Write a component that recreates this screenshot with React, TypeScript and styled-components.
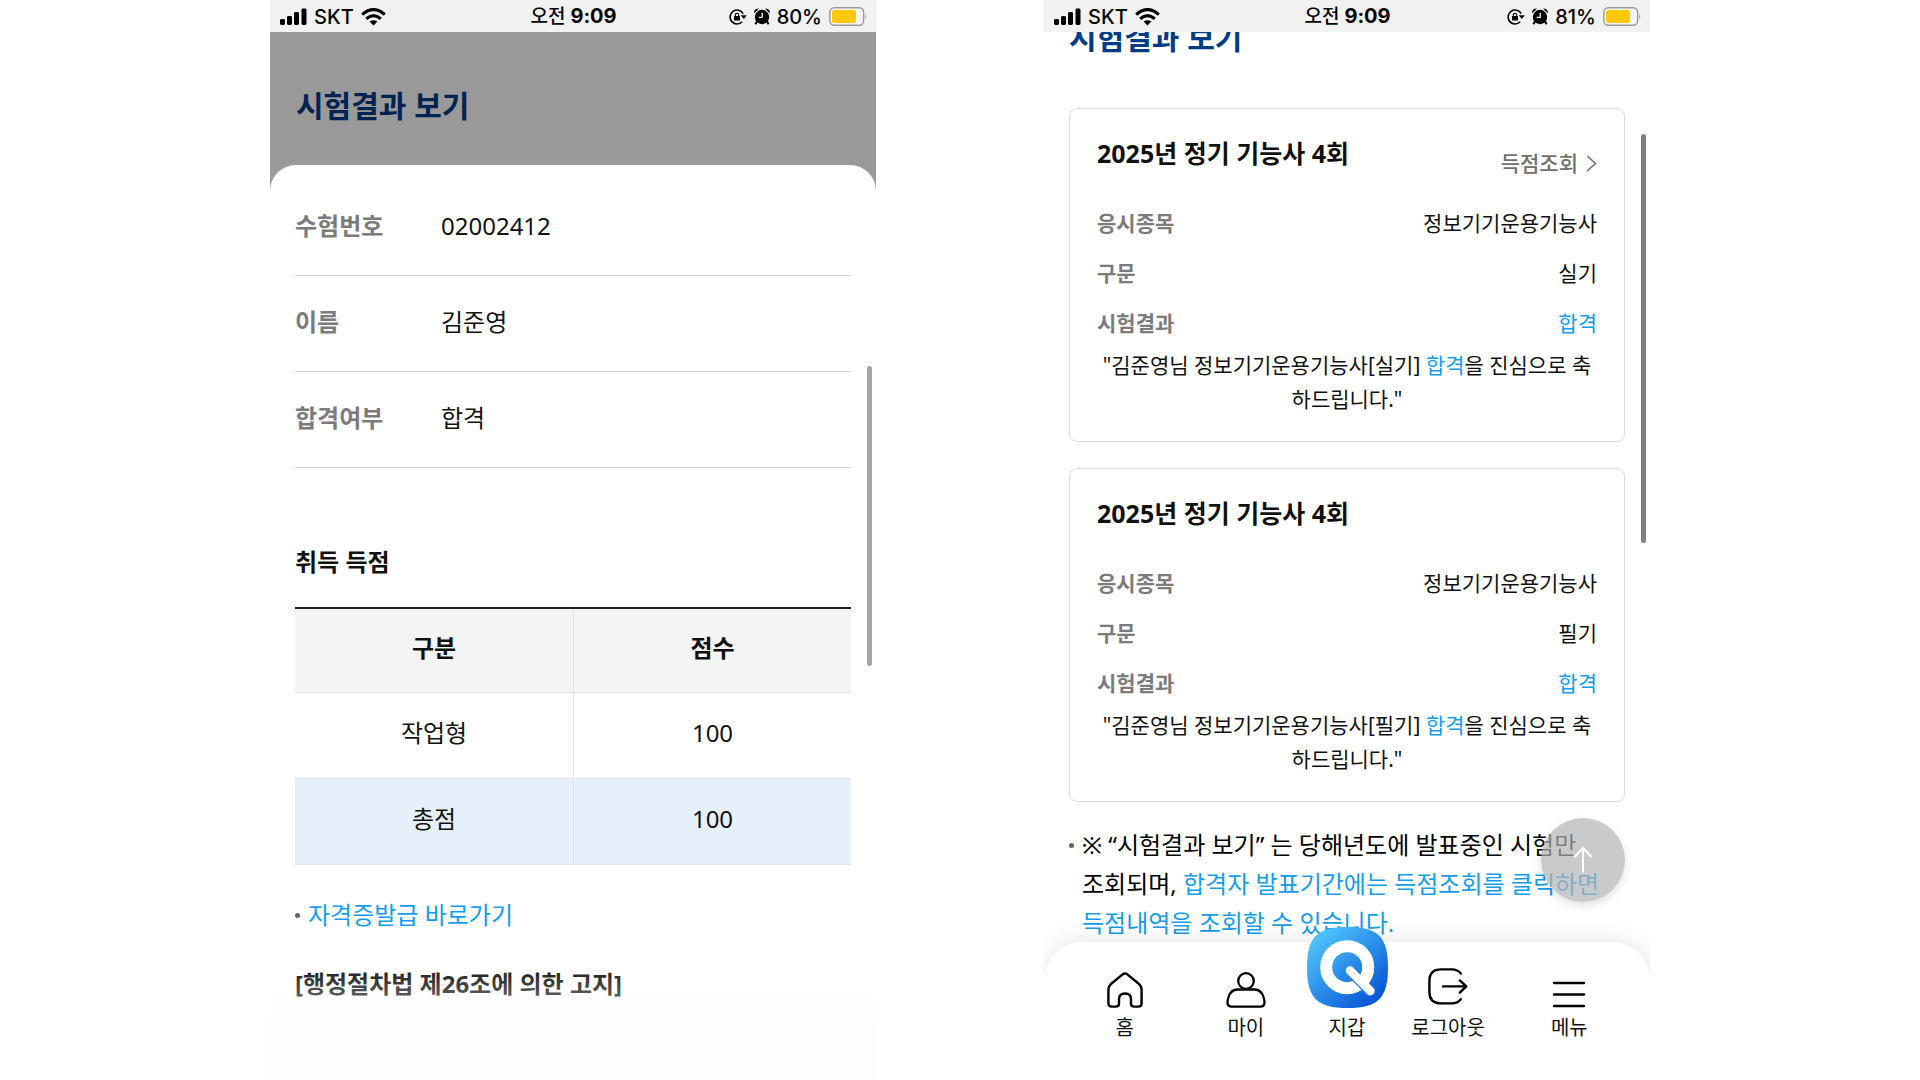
import React from 'react';
import styled, { createGlobalStyle } from 'styled-components';

const GlobalStyle = createGlobalStyle`
  *, *::before, *::after { box-sizing: border-box; }
  body {
    margin: 0;
    background: #fff;
    color: #111;
    font-family: "Noto Sans", "Noto Sans CJK KR", sans-serif;
    word-break: keep-all;
  }
  h1, h2, h3, p, dl, dd, ul { margin: 0; padding: 0; }
  ul { list-style: none; }
  a { color: inherit; text-decoration: none; }
  button { padding: 0; border: 0; background: none; font: inherit; color: inherit; cursor: pointer; }
  svg { display: block; flex: none; }
`;

const Screens = styled.main`
  display: grid;
  grid-template-columns: repeat(2, minmax(0, 606px));
  justify-content: center;
  column-gap: 168px;
  height: 100vh;
`;

const Phone = styled.section<{ $dimmed?: boolean }>`
  position: relative;
  display: flex;
  flex-direction: column;
  min-height: 0;
  overflow: hidden;
  background: ${(p) => (p.$dimmed ? '#999' : '#fff')};
`;

const StatusBar = styled.header`
  position: relative;
  z-index: 2;
  display: grid;
  grid-template-columns: 1fr auto 1fr;
  align-items: center;
  flex: none;
  height: 32px;
  padding: 0 9px 0 10px;
  background: #f1f1f1;
  color: #000;
  font: 500 20px/32px Inter, "Noto Sans CJK KR", sans-serif;
`;

const StatusGroup = styled.div<{ $end?: boolean }>`
  display: flex;
  align-items: center;
  justify-content: ${(p) => (p.$end ? 'flex-end' : 'flex-start')};
  gap: 7px;
`;

const Clock = styled.time`
  font-size: 19px;
  b { font-size: 20px; font-weight: 700; }
`;

const PageTitle = styled.h1<{ $dimmed?: boolean }>`
  font-size: 30px;
  line-height: 40px;
  font-weight: 700;
  color: ${(p) => (p.$dimmed ? '#002452' : '#003b88')};
`;

const DimmedHeader = styled.div`
  flex: none;
  height: 133px;
  padding: 54px 26px 0;
`;

const Sheet = styled.div`
  flex: 1;
  min-height: 0;
  overflow: hidden;
  padding: 15px 25px 0;
  border-radius: 26px 26px 0 0;
  background: #fff;
`;

const SheetFade = styled.div`
  position: absolute;
  inset: auto 0 0;
  height: 116px;
  background: linear-gradient(rgba(253, 253, 253, 0), #fdfdfd 90%);
  pointer-events: none;
`;

const InfoRow = styled.div`
  display: grid;
  grid-template-columns: 146px 1fr;
  align-items: center;
  height: 96px;
  padding-bottom: 4px;
  border-bottom: 1px solid #d9d9d9;
  font-size: 24px;
  line-height: 36px;
  dt { color: #7b7b7b; font-weight: 700; }
`;

const SectionTitle = styled.h2<{ $top: number }>`
  margin-top: ${(p) => p.$top}px;
  font-size: 24px;
  line-height: 36px;
  font-weight: 700;
`;

const ScoreTable = styled.table`
  width: 100%;
  margin-top: 27px;
  border-spacing: 0;
  border-top: 2px solid #202326;
  table-layout: fixed;
  font-size: 24px;
  line-height: 36px;
  text-align: center;
  th, td {
    height: 86px;
    padding: 0 0 6px;
    border-bottom: 1px solid #e3e3e3;
  }
  th + th, td + td { border-left: 1px solid #e3e3e3; }
  th { height: 84px; background: #f4f4f4; font-weight: 700; }
`;

const ScoreRow = styled.tr<{ $total?: boolean }>`
  background: ${(p) => (p.$total ? '#e6f0fb' : '#fff')};
`;

const BulletItem = styled.li`
  display: flex;
  gap: 8px;
  &::before {
    content: "";
    flex: none;
    width: 5px;
    height: 5px;
    margin-top: 18px;
    border-radius: 50%;
    background: #666;
  }
`;

const SheetLinks = styled.ul`
  margin-top: 30px;
  font-size: 24px;
  line-height: 39px;
  color: #149dee;
`;

const ScrollThumb = styled.div<{ $top: number; $length: number; $tone: string }>`
  position: absolute;
  top: ${(p) => p.$top}px;
  right: 4px;
  width: 5px;
  height: ${(p) => p.$length}px;
  border-radius: 3px;
  background: ${(p) => p.$tone};
`;

const ResultPage = styled.div`
  flex: 1;
  min-height: 0;
  padding: 0 25px;
  & > h1 { margin-top: -14px; }
`;

const CardList = styled.div`
  display: grid;
  gap: 26px;
  margin-top: 50px;
`;

const Card = styled.article`
  padding: 26px 27px 25px;
  border: 1px solid #dcdcdc;
  border-radius: 8px;
`;

const CardHead = styled.div`
  display: flex;
  align-items: center;
  justify-content: space-between;
  height: 56px;
  margin-bottom: 7px;
`;

const CardTitle = styled.h2`
  align-self: flex-start;
  font-size: 25px;
  line-height: 36px;
  font-weight: 700;
`;

const ScoreButton = styled.button`
  display: flex;
  align-items: center;
  gap: 8px;
  font-size: 21px;
  line-height: 34px;
  font-weight: 500;
  color: #6f6f6f;
`;

const CardRow = styled.div`
  display: flex;
  align-items: center;
  justify-content: space-between;
  height: 50px;
  font-size: 21px;
  line-height: 34px;
  dt { color: #7b7b7b; font-weight: 700; }
`;

const Accent = styled.span`
  color: #149dee;
`;

const Message = styled.p`
  font-size: 21px;
  line-height: 34px;
  text-align: center;
  word-break: break-all;
`;

const Notes = styled.ul`
  margin-top: 23px;
  font-size: 24px;
  line-height: 39px;
  color: #000;
`;

const TopButton = styled.button`
  position: absolute;
  right: 25px;
  bottom: 178px;
  display: grid;
  place-items: center;
  width: 84px;
  height: 84px;
  border-radius: 50%;
  background: rgba(178, 179, 181, 0.7);
  box-shadow: 0 4px 10px rgba(0, 0, 0, 0.12);
`;

const TabBar = styled.nav`
  position: relative;
  z-index: 1;
  flex: none;
  display: grid;
  grid-template-columns: 3fr 3fr 2fr 3fr 3fr;
  padding: 30px 20px 40px;
  border-radius: 38px 38px 0 0;
  background: #fff;
  box-shadow: 0 -2px 24px rgba(0, 0, 0, 0.1);
`;

const Tab = styled.a`
  display: flex;
  flex-direction: column;
  align-items: center;
  gap: 8px;
  font-size: 20px;
  line-height: 24px;
  white-space: nowrap;
`;

const TabIcon = styled.span`
  display: flex;
  align-items: flex-end;
  height: 36px;
`;

const SignalIcon = () => (
  <svg width="27" height="18" viewBox="0 0 27 18" fill="#000">
    <rect x="0" y="11" width="5" height="6" rx="1.4" />
    <rect x="7" y="8" width="5" height="9" rx="1.4" />
    <rect x="14" y="4" width="5" height="13" rx="1.4" />
    <rect x="21.500" y="0.500" width="5" height="16.500" rx="1.400" />
  </svg>
);

const WifiIcon = () => (
  <svg width="25" height="18" viewBox="0 0 25 18" fill="none" stroke="#000" strokeWidth="3.2">
    <path d="M1.200 6.600 Q12.500 -3.200 23.800 6.600" />
    <path d="M5.200 10.800 Q12.500 4.600 19.800 10.800" />
    <path d="M12.500 17.500 L8.600 13.600 Q12.500 10.800 16.400 13.600 Z" fill="#000" stroke="none" />
  </svg>
);

const RotationLockIcon = () => (
  <svg width="18" height="16" viewBox="0 0 18 16" fill="none" stroke="#000" strokeWidth="1.6">
    <path d="M14.200 4.600 A7 7 0 1 0 13.200 12.800" />
    <path d="M11.800 6.300 H17.800 L14.800 10 Z" fill="#000" stroke="none" />
    <rect x="5" y="7" width="6" height="4.600" rx="0.600" fill="#000" stroke="none" />
    <path d="M6.300 7.200 V5.800 Q6.300 4.400 8 4.400 Q9.700 4.400 9.700 5.800 V7.200" strokeWidth="1.1" />
  </svg>
);

const AlarmIcon = () => (
  <svg width="16" height="17" viewBox="0 0 16 17">
    <circle cx="8" cy="9" r="7.200" />
    <path d="M0.300 5.200 Q-0.500 0.600 5 0.600 Z M15.700 5.200 Q16.500 0.600 11 0.600 Z" />
    <path d="M3.300 13 L1.400 16.300 M12.700 13 L14.600 16.300" stroke="#000" strokeWidth="2" />
    <path d="M8.200 4.800 V9.400 H4.600" fill="none" stroke="#f1f1f1" strokeWidth="1.300" />
  </svg>
);

const BatteryIcon = () => (
  <svg width="38" height="19" viewBox="0 0 38 19">
    <rect x="0.800" y="0.800" width="33.800" height="17.400" rx="4.500" fill="#f6f6f6" stroke="#9a9a9a" strokeWidth="1.400" />
    <rect x="3" y="3" width="24" height="13" rx="2.500" fill="#ffc900" />
    <path d="M36.200 6.500 Q38 9.500 36.200 12.500 Z" fill="#9a9a9a" />
  </svg>
);

const ChevronIcon = () => (
  <svg width="11" height="17" viewBox="0 0 11 17" fill="none" stroke="#777" strokeWidth="1.600">
    <path d="M1.200 1.200 L9.600 8.500 L1.200 15.800" />
  </svg>
);

const UpArrowIcon = () => (
  <svg width="20" height="28" viewBox="0 0 20 28" fill="none" stroke="#fff" strokeWidth="2">
    <path d="M10 26.500 V2 M1.500 11 L10 2 L18.500 11" />
  </svg>
);

const HomeIcon = () => (
  <svg width="36" height="36" viewBox="0 0 36 36" fill="none" stroke="#000" strokeWidth="2.400" strokeLinejoin="round">
    <path d="M15.300 2.600 Q18 0.400 20.700 2.600 L32 12 Q34.600 14.300 34.600 17.500 V31.200 Q34.600 34.600 31.200 34.600 H27.200 Q24 34.600 24 31.400 V27 Q24 21.500 18 21.500 Q12 21.500 12 27 V31.400 Q12 34.600 8.800 34.600 H4.800 Q1.400 34.600 1.400 31.200 V17.500 Q1.400 14.300 4 12 Z" />
  </svg>
);

const PersonIcon = () => (
  <svg width="40" height="36" viewBox="0 0 40 36" fill="none" stroke="#000" strokeWidth="2.300">
    <circle cx="20" cy="9" r="7.800" />
    <path d="M11.500 17.500 H28.500 Q35 17.500 37.500 25 Q40.500 34.600 34.500 34.600 H5.500 Q-0.500 34.600 2.500 25 Q5 17.500 11.500 17.500 Z" />
  </svg>
);

const WalletIcon = () => (
  <svg width="81" height="81" viewBox="0 0 81 81" fill="none">
    <defs>
      <linearGradient id="wallet" x1="6" y1="6" x2="70" y2="78" gradientUnits="userSpaceOnUse">
        <stop offset="0" stopColor="#54c8fd" />
        <stop offset="0.500" stopColor="#2b8fe9" />
        <stop offset="1" stopColor="#0450d6" />
      </linearGradient>
    </defs>
    <path d="M40.500 0 C71 0 81 10 81 40.500 C81 71 71 81 40.500 81 C10 81 0 71 0 40.500 C0 10 10 0 40.500 0 Z" fill="url(#wallet)" />
    <circle cx="40.200" cy="40.200" r="21" stroke="#fff" strokeWidth="12" />
    <path d="M42.300 44.200 L62.500 64.800" stroke="#2f86e6" strokeWidth="9" strokeLinecap="round" />
    <path d="M43 43.500 L63.500 64" stroke="#fff" strokeWidth="8.500" strokeLinecap="round" />
  </svg>
);

const LogoutIcon = () => (
  <svg width="40" height="40" viewBox="0 0 40 40" fill="none" stroke="#000" strokeWidth="2.400" strokeLinecap="round" strokeLinejoin="round">
    <path d="M32.800 5.600 Q29.500 1.400 24 1.400 H13 Q1.400 1.400 1.400 13 V24 Q1.400 35.400 13 35.400 H24 Q29.500 35.400 32.800 31.200" />
    <path d="M15 18.400 H38 M31.800 12.400 L38.300 18.400 L31.800 24.600" />
  </svg>
);

const MenuIcon = () => (
  <svg width="34" height="28" viewBox="0 0 34 28" fill="none" stroke="#000" strokeWidth="2.400" strokeLinecap="round">
    <path d="M2 3 H32 M2 14.500 H32 M2 26 H32" />
  </svg>
);

const PhoneStatus = ({ battery }: { battery: number }) => (
  <StatusBar>
    <StatusGroup>
      <SignalIcon />
      <span>SKT</span>
      <WifiIcon />
    </StatusGroup>
    <Clock dateTime="09:09">
      오전 <b>9:09</b>
    </Clock>
    <StatusGroup $end>
      <RotationLockIcon />
      <AlarmIcon />
      <span>{`${battery}%`}</span>
      <BatteryIcon />
    </StatusGroup>
  </StatusBar>
);

const details = [
  { label: '수험번호', value: '02002412' },
  { label: '이름', value: '김준영' },
  { label: '합격여부', value: '합격' },
];

const scores = [
  { part: '작업형', score: 100, total: false },
  { part: '총점', score: 100, total: true },
];

const results = [
  { stage: '실기', hasScore: true },
  { stage: '필기', hasScore: false },
];

const tabs = [
  { label: '홈', Icon: HomeIcon },
  { label: '마이', Icon: PersonIcon },
  { label: '지갑', Icon: WalletIcon },
  { label: '로그아웃', Icon: LogoutIcon },
  { label: '메뉴', Icon: MenuIcon },
];

const ScoreScreen = () => (
  <Phone $dimmed>
    <PhoneStatus battery={80} />
    <DimmedHeader>
      <PageTitle $dimmed>시험결과 보기</PageTitle>
    </DimmedHeader>
    <Sheet>
      <dl>
        {details.map((d) => (
          <InfoRow key={d.label}>
            <dt>{d.label}</dt>
            <dd>{d.value}</dd>
          </InfoRow>
        ))}
      </dl>
      <SectionTitle $top={76}>취득 득점</SectionTitle>
      <ScoreTable>
        <thead>
          <tr>
            <th scope="col">구분</th>
            <th scope="col">점수</th>
          </tr>
        </thead>
        <tbody>
          {scores.map((s) => (
            <ScoreRow key={s.part} $total={s.total}>
              <td>{s.part}</td>
              <td>{s.score}</td>
            </ScoreRow>
          ))}
        </tbody>
      </ScoreTable>
      <SheetLinks>
        <BulletItem>
          <a href="#certificate">자격증발급 바로가기</a>
        </BulletItem>
      </SheetLinks>
      <SectionTitle $top={32}>[행정절차법 제26조에 의한 고지]</SectionTitle>
    </Sheet>
    <SheetFade />
    <ScrollThumb $top={366} $length={300} $tone="#a5a5a5" />
  </Phone>
);

const ResultScreen = () => (
  <Phone>
    <PhoneStatus battery={81} />
    <ResultPage>
      <PageTitle>시험결과 보기</PageTitle>
      <CardList>
        {results.map((r) => (
          <Card key={r.stage}>
            <CardHead>
              <CardTitle>2025년 정기 기능사 4회</CardTitle>
              {r.hasScore && (
                <ScoreButton type="button">
                  득점조회
                  <ChevronIcon />
                </ScoreButton>
              )}
            </CardHead>
            <dl>
              <CardRow>
                <dt>응시종목</dt>
                <dd>정보기기운용기능사</dd>
              </CardRow>
              <CardRow>
                <dt>구문</dt>
                <dd>{r.stage}</dd>
              </CardRow>
              <CardRow>
                <dt>시험결과</dt>
                <dd>
                  <Accent>합격</Accent>
                </dd>
              </CardRow>
            </dl>
            <Message>
              {`"김준영님 정보기기운용기능사[${r.stage}] `}
              <Accent>합격</Accent>을 진심으로 축하드립니다."
            </Message>
          </Card>
        ))}
      </CardList>
      <Notes>
        <BulletItem>
          <p>
            ※ “시험결과 보기” 는 당해년도에 발표중인 시험만 조회되며,{' '}
            <Accent>합격자 발표기간에는 득점조회를 클릭하면 득점내역을 조회할 수 있습니다.</Accent>
          </p>
        </BulletItem>
      </Notes>
    </ResultPage>
    <TopButton type="button" aria-label="맨 위로">
      <UpArrowIcon />
    </TopButton>
    <TabBar>
      {tabs.map(({ label, Icon }) => (
        <Tab key={label} href="#">
          <TabIcon>
            <Icon />
          </TabIcon>
          {label}
        </Tab>
      ))}
    </TabBar>
    <ScrollThumb $top={134} $length={409} $tone="#808080" />
  </Phone>
);

const App = () => (
  <>
    <GlobalStyle />
    <Screens>
      <ScoreScreen />
      <ResultScreen />
    </Screens>
  </>
);

export default App;
